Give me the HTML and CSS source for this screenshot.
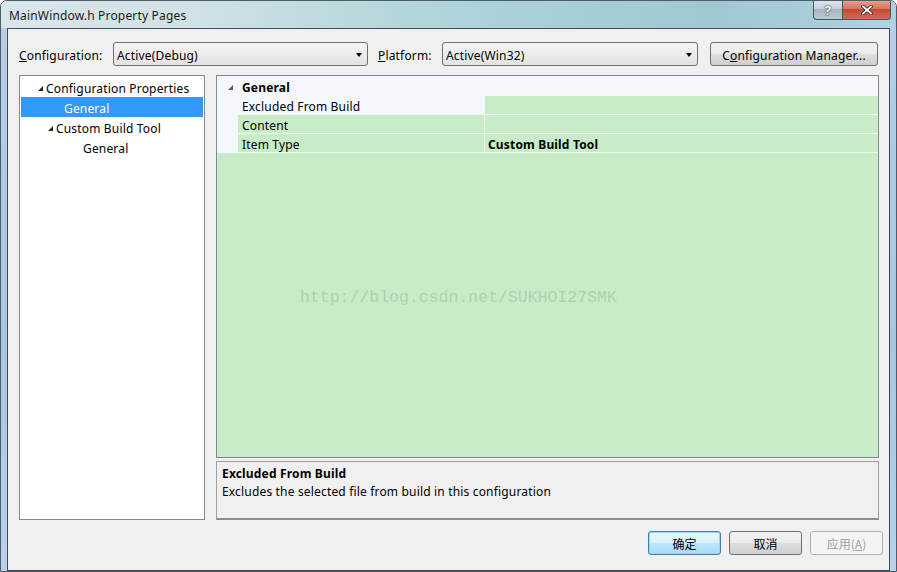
FILE: index.html
```html
<!DOCTYPE html>
<html lang="en">
<head>
  <meta charset="UTF-8">
  <title>MainWindow.h Property Pages</title>
  <link rel="stylesheet" href="styles.css">
</head>
<body>

<div class="window">
  <div class="titlebar">
    <span class="title">MainWindow.h Property Pages</span>
    <div class="caption-btns">
      <div class="cap-help">?</div>
      <div class="cap-close">
        <svg width="12" height="10" viewBox="0 0 12 10">
          <path d="M2 1.5 L10 8.5 M10 1.5 L2 8.5" stroke="#3a2020" stroke-width="3.4" stroke-linecap="square"/>
          <path d="M2 1.5 L10 8.5 M10 1.5 L2 8.5" stroke="#fff" stroke-width="1.8" stroke-linecap="square"/>
        </svg>
      </div>
    </div>
  </div>

  <div class="client">
    <div class="config-row">
      <span class="lbl lbl-config"><u>C</u>onfiguration:</span>
      <div class="combo combo-config"><span>Active(Debug)</span><span class="arrow"></span></div>
      <span class="lbl lbl-platform"><u>P</u>latform:</span>
      <div class="combo combo-platform"><span>Active(Win32)</span><span class="arrow"></span></div>
      <button class="btn btn-manager">C<u>o</u>nfiguration Manager...</button>
    </div>

    <div class="main">
      <div class="tree">
        <div class="node lvl0"><span class="expander"></span>Configuration Properties</div>
        <div class="node lvl1 selected">General</div>
        <div class="node lvl1b"><span class="expander"></span>Custom Build Tool</div>
        <div class="node lvl2">General</div>
      </div>

      <div class="right-col">
        <div class="grid">
          <div class="grid-cat">
            <span class="margin"><span class="expander grey"></span></span>
            <span class="cat-name">General</span>
          </div>
          <div class="grid-row light">
            <span class="margin"></span>
            <span class="name">Excluded From Build</span>
            <span class="value"></span>
          </div>
          <div class="grid-row">
            <span class="margin"></span>
            <span class="name">Content</span>
            <span class="value"></span>
          </div>
          <div class="grid-row">
            <span class="margin"></span>
            <span class="name">Item Type</span>
            <span class="value strong">Custom Build Tool</span>
          </div>
          <div class="grid-fill"></div>
          <div class="watermark">http://blog.csdn.net/SUKHOI27SMK</div>
        </div>

        <div class="desc">
          <div class="desc-title">Excluded From Build</div>
          <div class="desc-text">Excludes the selected file from build in this configuration</div>
        </div>
      </div>
    </div>

    <div class="dialog-btns">
      <button class="btn btn-default">确定</button>
      <button class="btn">取消</button>
      <button class="btn btn-disabled">应用(<u>A</u>)</button>
    </div>
  </div>
</div>

</body>
</html>
```

FILE: styles.css
```css
body {
  margin: 0;
  font-family: "Noto Sans", "Noto Sans CJK SC", sans-serif;
  font-size: 12px;
  letter-spacing: 0.17px;
  color: #000;
  background: #fff;
}

.window {
  width: 897px;
  height: 572px;
  box-sizing: border-box;
  border: 1px solid #4f5d6b;
  border-radius: 7px 7px 0 0;
  background: linear-gradient(to bottom, #b7cfe6, #a8c5e2 60%, #b9d1ea);
  display: flex;
  flex-direction: column;
  overflow: hidden;
}

/* title bar */
.titlebar {
  height: 28px;
  display: flex;
  justify-content: space-between;
  align-items: flex-start;
  background: linear-gradient(to right, #dbe6ec 0%, #cfe1e6 22%, #b3d6da 45%, #a7cfd6 62%, #a0c8d3 80%, #b0d1e2 100%);
}

.title {
  padding: 7px 0 0 8px;
  line-height: 16px;
  color: #1b1b1b;
}

.caption-btns {
  display: flex;
  margin: -1px 5px 0 0;
}

.cap-help,
.cap-close {
  height: 19px;
  border: 1px solid #4a5560;
  border-top: none;
  display: flex;
  align-items: center;
  justify-content: center;
}

.cap-help {
  width: 28px;
  border-right: none;
  border-radius: 0 0 0 4px;
  background: linear-gradient(to bottom, #dfe7ec, #c5d2da 45%, #a7b7c2 50%, #bccad3);
  color: #fff;
  font-weight: bold;
  font-size: 13px;
  text-shadow: 0 0 2px #2b3440, 0 0 1px #2b3440;
}

.cap-close {
  width: 47px;
  border-radius: 0 0 4px 0;
  background: linear-gradient(to bottom, #e8a493, #d77461 45%, #c34a35 50%, #d26a54);
}

/* client area */
.client {
  margin: 0 6px;
  height: 533px;
  border: 1px solid #3d4a58;
  background: #f0f0f0;
  padding: 13px 9px 7px 11px;
  box-sizing: content-box;
  display: flex;
  flex-direction: column;
}

.client > * {
  flex-shrink: 0;
}

.config-row {
  height: 24px;
  display: flex;
  align-items: center;
}

.lbl {
  line-height: 20px;
  padding-top: 4px;
}

.lbl-config {
  width: 94px;
}

.lbl-platform {
  width: 64px;
  margin-left: 10px;
}

.combo,
.btn {
  height: 24px;
  box-sizing: border-box;
  border: 1px solid #707070;
  border-radius: 3px;
  background: linear-gradient(to bottom, #f2f2f2 0%, #ebebeb 48%, #dddddd 52%, #cfcfcf 100%);
  font-family: inherit;
  font-size: 12px;
  letter-spacing: 0.17px;
  color: #000;
}

.combo {
  display: flex;
  align-items: center;
  justify-content: space-between;
  padding: 2px 5px 0 3px;
  background: linear-gradient(to bottom, #f4f4f4 0%, #ececec 50%, #e2e2e2 100%);
}

.combo-config {
  width: 255px;
}

.combo-platform {
  width: 256px;
}

.arrow {
  width: 0;
  height: 0;
  border-left: 3.5px solid transparent;
  border-right: 3.5px solid transparent;
  border-top: 4px solid #000;
}

.btn {
  padding: 2px 0 0;
}

.btn-manager {
  width: 168px;
  margin-left: 12px;
}

/* main panes */
.main {
  height: 445px;
  margin-top: 9px;
  display: flex;
  gap: 11px;
}

.tree {
  width: 186px;
  box-sizing: border-box;
  border: 1px solid #828790;
  background: #fff;
  padding-top: 1px;
}

.node {
  height: 20px;
  box-sizing: border-box;
  padding-top: 3px;
  line-height: 17px;
  display: flex;
  align-items: center;
  white-space: nowrap;
}

.node.selected {
  background: #3399ff;
  color: #fff;
  margin: 0 1px;
}

.lvl0 { padding-left: 18px; }
.lvl1 { padding-left: 43px; }
.lvl1b { padding-left: 28px; }
.lvl2 { padding-left: 63px; }

.expander {
  width: 0;
  height: 0;
  border-left: 5px solid transparent;
  border-bottom: 5px solid #262626;
  margin: 0 3px 0 0;
}

.expander.grey {
  border-bottom-color: #5e5e5e;
  margin: 3px 0 0 0;
}

.right-col {
  width: 663px;
  display: flex;
  flex-direction: column;
}

.grid {
  height: 383px;
  box-sizing: border-box;
  border: 1px solid #828790;
  background: #c8ecc8;
  display: flex;
  flex-direction: column;
  position: relative;
}

.grid-cat {
  height: 20px;
  background: #f4f7fc;
  display: flex;
  align-items: center;
}

.margin {
  width: 21px;
  box-sizing: border-box;
  padding-left: 11px;
  align-self: stretch;
  background: #f4f7fc;
  display: flex;
  align-items: center;
}

.cat-name {
  font-weight: bold;
  padding: 4px 0 0 4px;
  line-height: 16px;
}

.grid-row {
  height: 19px;
  display: flex;
}

.grid-row .name,
.grid-row .value {
  box-sizing: border-box;
  border-bottom: 1px solid #f2faf2;
  padding-top: 3px;
  line-height: 15px;
  padding-left: 4px;
  white-space: nowrap;
}

.grid-row .name {
  width: 247px;
  border-right: 1px solid #f2faf2;
}

.grid-row .value {
  flex: 1;
  padding-left: 3px;
}

.grid-row.light .name {
  background: #f4f7fc;
}

.strong {
  font-weight: bold;
}

.grid-fill {
  flex: 1;
}

.watermark {
  position: absolute;
  left: 83px;
  top: 212px;
  font-family: "Liberation Mono", monospace;
  font-size: 16.5px;
  letter-spacing: 0;
  line-height: 20px;
  color: #afd2af;
}

.desc {
  height: 59px;
  margin-top: 3px;
  box-sizing: border-box;
  border: 1px solid #a0a0a0;
  border-bottom: 2px solid #8c8c8c;
  padding: 3px 5px;
  line-height: 18px;
}

.desc-title {
  font-weight: bold;
}

/* dialog buttons */
.dialog-btns {
  margin-top: 11px;
  margin-right: -3px;
  display: flex;
  justify-content: flex-end;
  gap: 8px;
}

.dialog-btns .btn {
  width: 73px;
  padding-top: 1px;
  font-family: "Noto Sans CJK SC", sans-serif;
  letter-spacing: 0;
}

.btn-default {
  border-color: #3c7fb1;
  background: linear-gradient(to bottom, #eaf6fd 0%, #d9f0fc 48%, #bee6fd 52%, #a7d9f5 100%);
  box-shadow: inset 0 0 0 1px #9fd3f0;
}

.btn-disabled {
  border-color: #adb2b5;
  background: #f4f4f4;
  color: #a0a0a0;
}
```
